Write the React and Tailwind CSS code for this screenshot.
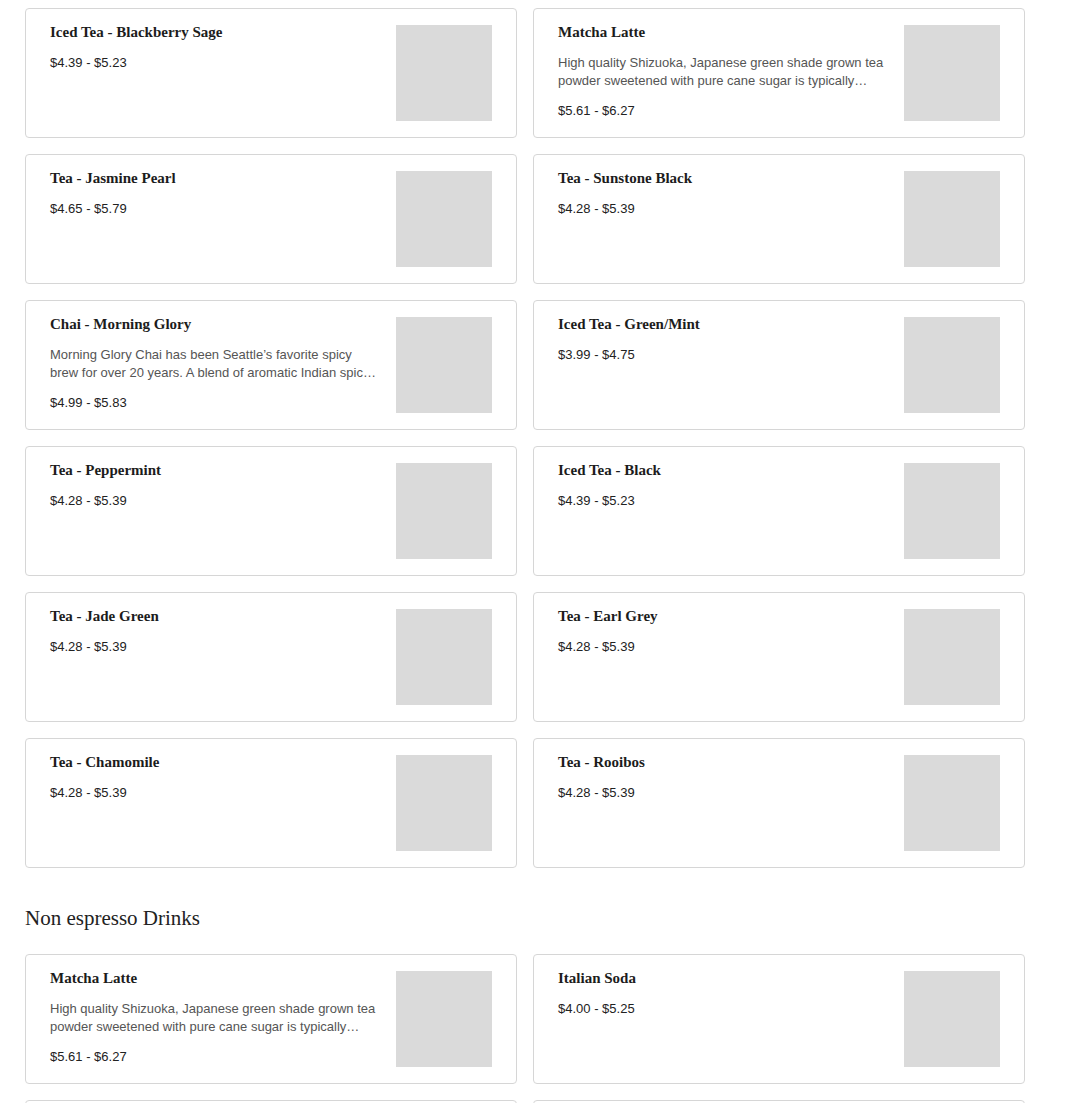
const TEAS = [
  { name: 'Iced Tea - Blackberry Sage', price: '$4.39 - $5.23' },
  {
    name: 'Matcha Latte',
    desc: 'High quality Shizuoka, Japanese green shade grown tea powder sweetened with pure cane sugar is typically served as a latte.',
    price: '$5.61 - $6.27',
  },
  { name: 'Tea - Jasmine Pearl', price: '$4.65 - $5.79' },
  { name: 'Tea - Sunstone Black', price: '$4.28 - $5.39' },
  {
    name: 'Chai - Morning Glory',
    desc: "Morning Glory Chai has been Seattle’s favorite spicy brew for over 20 years. A blend of aromatic Indian spices and black tea.",
    price: '$4.99 - $5.83',
  },
  { name: 'Iced Tea - Green/Mint', price: '$3.99 - $4.75' },
  { name: 'Tea - Peppermint', price: '$4.28 - $5.39' },
  { name: 'Iced Tea - Black', price: '$4.39 - $5.23' },
  { name: 'Tea - Jade Green', price: '$4.28 - $5.39' },
  { name: 'Tea - Earl Grey', price: '$4.28 - $5.39' },
  { name: 'Tea - Chamomile', price: '$4.28 - $5.39' },
  { name: 'Tea - Rooibos', price: '$4.28 - $5.39' },
]

const NON_ESPRESSO = [
  {
    name: 'Matcha Latte',
    desc: 'High quality Shizuoka, Japanese green shade grown tea powder sweetened with pure cane sugar is typically served as a latte.',
    price: '$5.61 - $6.27',
  },
  { name: 'Italian Soda', price: '$4.00 - $5.25' },
  { name: 'Hot Chocolate', price: '$3.75 - $4.85' },
  { name: 'Steamer', price: '$3.50 - $4.50' },
]

const serif = "font-['Liberation_Serif','Times_New_Roman',serif]"
const sans = "font-['Liberation_Sans',Arial,sans-serif]"

function ItemCard({ name, desc, price }) {
  return (
    <div className="flex gap-4 h-[130px] rounded-[4px] border border-[#d6d6d6] bg-white px-6 py-4">
      <div className="flex-1 min-w-0">
        <div className={`${serif} text-[15px] leading-[14px] font-bold text-[#1c1c1c] mb-[15px]`}>{name}</div>
        {desc && (
          <p className={`${sans} text-[13px] leading-[18px] text-[#555] line-clamp-2 mb-3`}>{desc}</p>
        )}
        <div className={`${sans} text-[13px] leading-[18px] text-[#222]`}>{price}</div>
      </div>
      <div className="w-24 h-24 flex-shrink-0 bg-[#dadada]" />
    </div>
  )
}

export default function App() {
  return (
    <div className="min-h-screen bg-white pl-[25px] pt-2">
      <div className="w-[1000px]">
        {/* Tea */}
        <div className="grid grid-cols-2 gap-4">
          {TEAS.map((item, i) => <ItemCard key={i} {...item} />)}
        </div>

        {/* Non espresso Drinks */}
        <h2 className={`${serif} text-[21px] leading-[28px] text-[#222] mt-[36px] mb-[22px]`}>Non espresso Drinks</h2>
        <div className="grid grid-cols-2 gap-4 pb-8">
          {NON_ESPRESSO.map((item, i) => <ItemCard key={i} {...item} />)}
        </div>
      </div>
    </div>
  )
}
